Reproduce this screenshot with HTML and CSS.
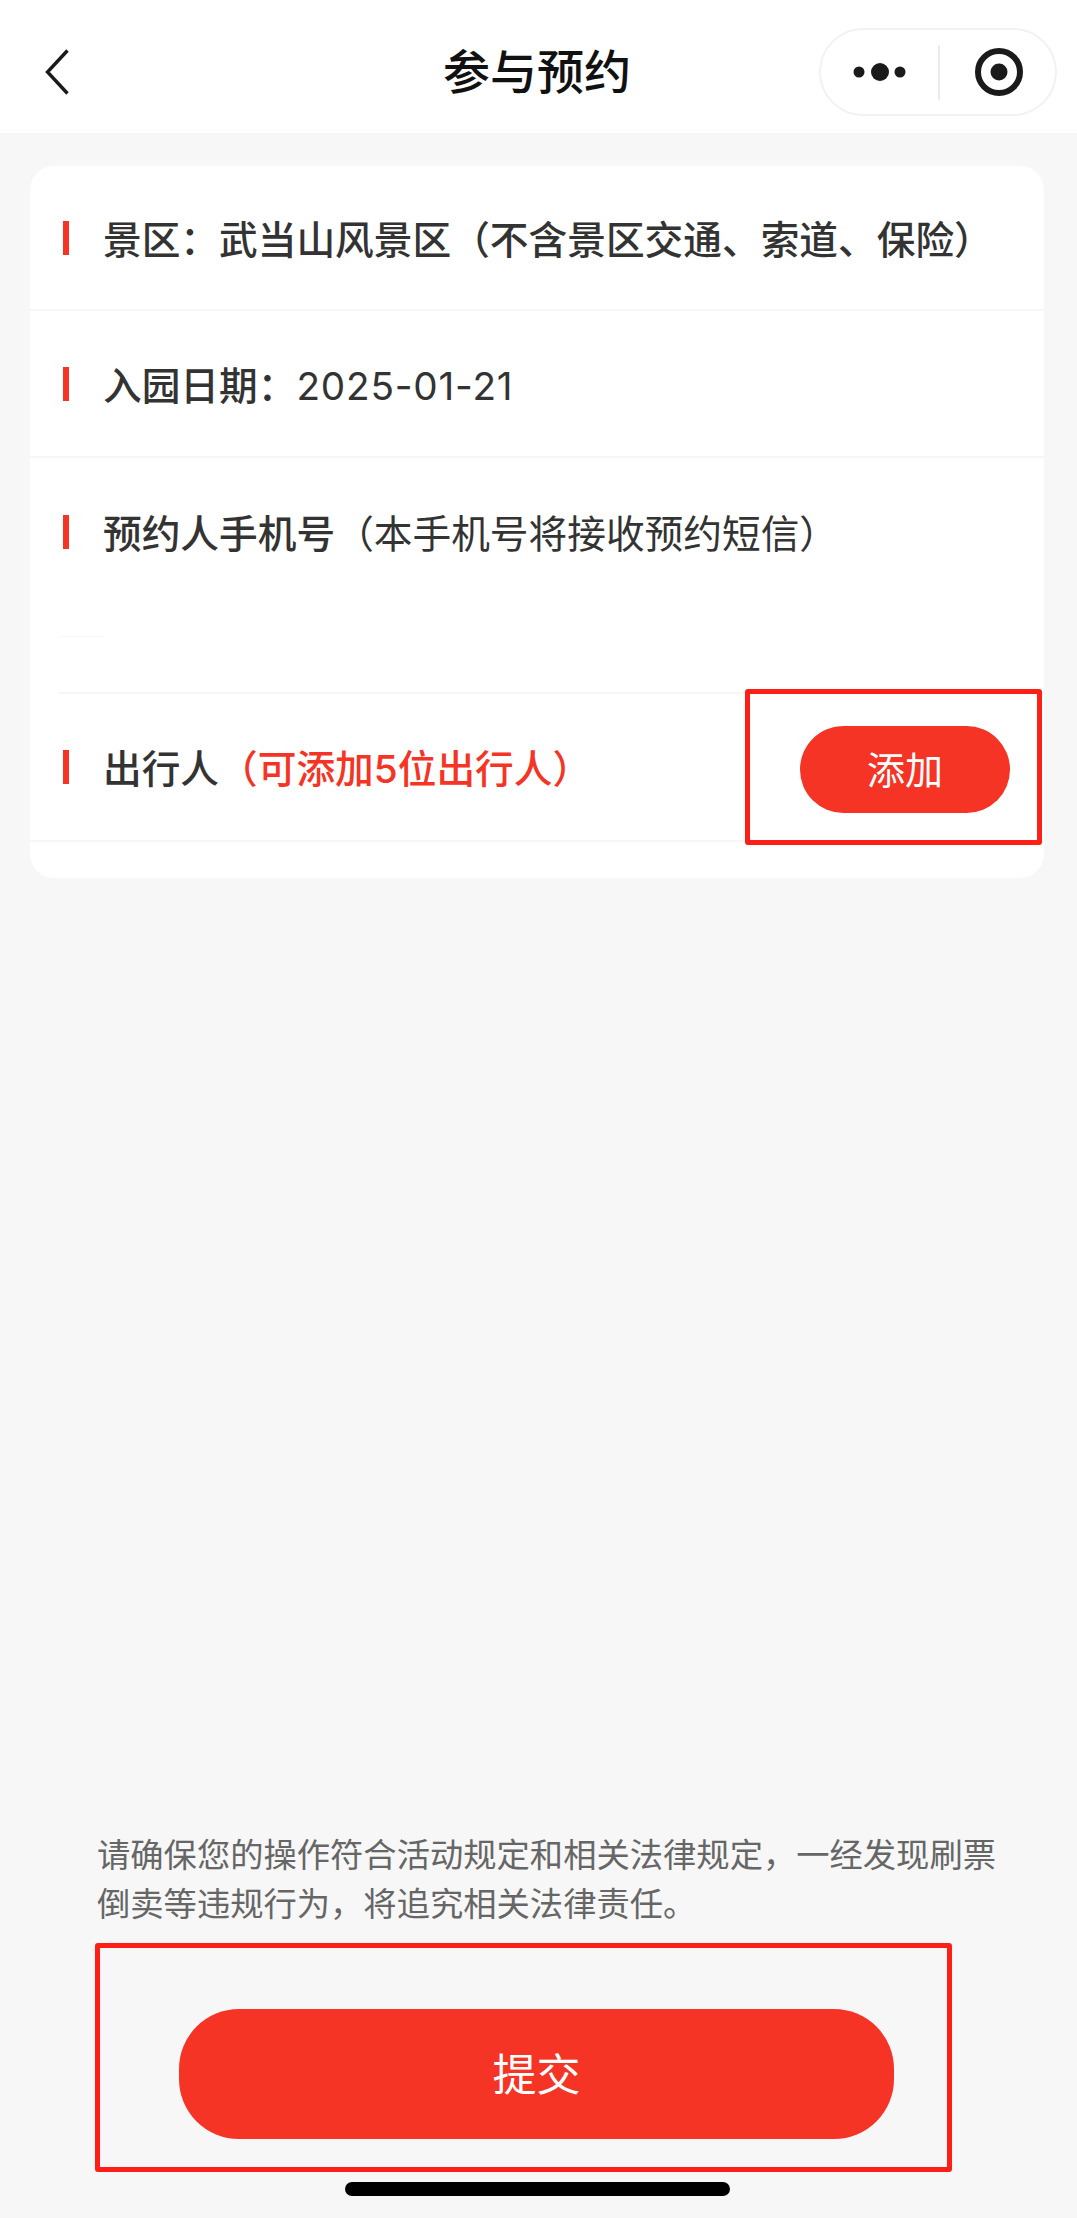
FILE: index.html
```html
<!DOCTYPE html>
<html lang="zh-CN">
<head>
    <meta charset="UTF-8">
    <meta name="viewport" content="width=device-width, initial-scale=1.0">
    <title>参与预约</title>
    <link rel="stylesheet" href="styles.css">
</head>
<body>
    <div class="page">
        <header class="nav">
            <svg class="back" width="24" height="46" viewBox="0 0 24 46">
                <path d="M22.5 1.5 L2.5 23 L22.5 44.5" fill="none" stroke="#1a1a1a" stroke-width="3.4"/>
            </svg>
            <h1>参与预约</h1>
            <div class="capsule">
                <svg class="dots" width="60" height="20" viewBox="0 0 60 20">
                    <circle cx="6" cy="10" r="5.5" fill="#1a1a1a"/>
                    <circle cx="27" cy="10" r="9" fill="#1a1a1a"/>
                    <circle cx="47" cy="10" r="5.5" fill="#1a1a1a"/>
                </svg>
                <span class="capsule-line"></span>
                <svg class="target" width="48" height="48" viewBox="0 0 48 48">
                    <circle cx="24" cy="24" r="21" fill="none" stroke="#1a1a1a" stroke-width="6"/>
                    <circle cx="24" cy="24" r="8.5" fill="#1a1a1a"/>
                </svg>
            </div>
        </header>

        <main class="card">
            <div class="row">
                <span class="mark"></span>
                <p class="label">景区&#xFF1A;武当山风景区&#xFF08;不含景区交通、索道、保险&#xFF09;</p>
            </div>
            <div class="row">
                <span class="mark"></span>
                <p class="label">入园日期&#xFF1A;<span class="date">2025-01-21</span></p>
            </div>
            <div class="row row-phone">
                <div class="row-head">
                    <span class="mark"></span>
                    <p class="label">预约人手机号<span class="hint">&#xFF08;本手机号将接收预约短信&#xFF09;</span></p>
                </div>
                <span class="input-line"></span>
            </div>
            <div class="row row-people">
                <span class="mark"></span>
                <p class="label">出行人<span class="limit">&#xFF08;可添加5位出行人&#xFF09;</span></p>
                <button class="add-btn">添加</button>
                <span class="add-box"></span>
            </div>
        </main>

        <footer class="bottom">
            <p class="notice">请确保您的操作符合活动规定和相关法律规定&#xFF0C;一经发现刷票<br>倒卖等违规行为&#xFF0C;将追究相关法律责任。</p>
            <div class="submit-box">
                <button class="submit-btn">提交</button>
            </div>
            <div class="home-bar"></div>
        </footer>
    </div>
</body>
</html>
```

FILE: styles.css
```css
:root {
    --red: #f53425;
    --box-red: #ff1f17;
    --background: #f7f7f7;
    --line: #f6f6f6;
    --text: #333333;
}

* {
    margin: 0;
    padding: 0;
    box-sizing: border-box;
}

body {
    font-family: Inter, "Noto Sans CJK SC", "Noto Sans", sans-serif;
    background-color: var(--background);
    color: var(--text);
}

.page {
    height: 2218px;
    display: flex;
    flex-direction: column;
    overflow: hidden;
}

.nav {
    position: relative;
    flex: none;
    height: 133px;
    background: #ffffff;
    display: flex;
    align-items: center;
    justify-content: center;
    padding-right: 3px;
}

.nav h1 {
    font-size: 47px;
    font-weight: 500;
    color: #111111;
    line-height: 1;
    padding-top: 10px;
}

.back {
    position: absolute;
    left: 45px;
    top: 49px;
}

.capsule {
    position: absolute;
    left: 819px;
    top: 28px;
    width: 238px;
    height: 88px;
    border: 2px solid #f2f2f2;
    border-radius: 44px;
    display: flex;
    align-items: center;
    padding-left: 32px;
}

.capsule-line {
    width: 2px;
    height: 55px;
    background: #ececec;
    margin-left: 25px;
}

.target {
    margin-left: 35px;
}

.card {
    flex: none;
    margin: 33px 33px 0 30px;
    padding-bottom: 36px;
    background: #ffffff;
    border-radius: 24px;
}

.row {
    position: relative;
    height: 147px;
    display: flex;
    align-items: center;
    padding-left: 33px;
    border-bottom: 2px solid var(--line);
}

.row:first-child {
    height: 145px;
}

.mark {
    flex: none;
    width: 6px;
    height: 34px;
    background: var(--red);
    margin-right: 34px;
}

.label {
    font-size: 38.7px;
    font-weight: 500;
    line-height: 1.2;
    white-space: nowrap;
    padding-top: 5px;
}

.hint {
    font-weight: 400;
}

.date {
    font-weight: 400;
    letter-spacing: 0.8px;
}

.limit {
    color: var(--red);
}

.row-phone {
    display: block;
    height: 236px;
    margin-left: 28px;
    padding-left: 5px;
}

.row-head {
    height: 147px;
    display: flex;
    align-items: center;
}

.input-line {
    display: block;
    position: absolute;
    left: 2px;
    top: 178px;
    width: 44px;
    height: 1px;
    background: var(--line);
}

.row-people {
    height: 148px;
}

.add-btn {
    position: absolute;
    left: 770px;
    top: 32px;
    width: 210px;
    height: 87px;
    border: none;
    border-radius: 44px;
    background: var(--red);
    color: #ffffff;
    font-family: inherit;
    font-size: 38px;
    padding-bottom: 5px;
}

.add-box {
    position: absolute;
    left: 715px;
    top: -5px;
    width: 297px;
    height: 156px;
    border: 5px solid var(--box-red);
    border-radius: 3px;
}

.bottom {
    flex: none;
    margin-top: auto;
    padding-bottom: 22px;
}

.notice {
    margin-left: 97px;
    font-size: 33.3px;
    line-height: 49px;
    color: #666666;
    white-space: nowrap;
}

.submit-box {
    margin: 14px 0 0 95px;
    width: 857px;
    height: 229px;
    border: 5px solid var(--box-red);
    border-radius: 3px;
    padding: 61px 0 0 79px;
}

.submit-btn {
    display: block;
    width: 715px;
    height: 130px;
    border: none;
    border-radius: 60px;
    background: var(--red);
    color: #ffffff;
    font-family: inherit;
    font-size: 44px;
    padding-bottom: 5px;
}

.home-bar {
    width: 385px;
    height: 14px;
    margin: 10px 0 0 345px;
    border-radius: 7px;
    background: #000000;
}
```
